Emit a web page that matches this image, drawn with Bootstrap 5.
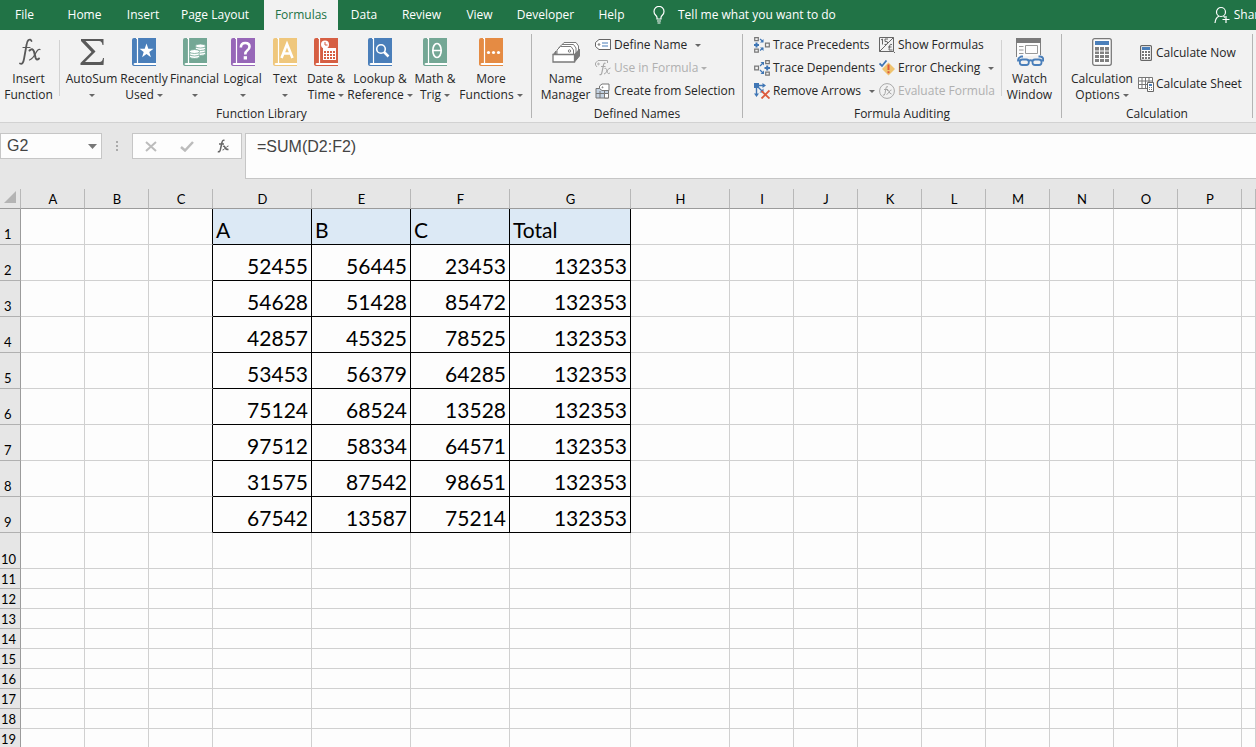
<!DOCTYPE html>
<html lang="en">
<head>
<meta charset="utf-8">
<meta name="viewport" content="width=device-width, initial-scale=1">
<title>Workbook - Formulas</title>
<link href="https://cdn.jsdelivr.net/npm/bootstrap@5.3.0/dist/css/bootstrap.min.css" rel="stylesheet">
<script src="https://cdn.jsdelivr.net/npm/bootstrap@5.3.0/dist/js/bootstrap.bundle.min.js"></script>
<style>
  :root { --xl-green: #217346; --xl-chrome: #e6e6e6; --xl-line: #d0d0d0; }
  body { font-family: "Open Sans", "Noto Sans", sans-serif; font-size: 12px; line-height: 16px; color: #262626; background: #fdfdfd; overflow-x: hidden; }
  button { font: inherit; color: inherit; background: none; border: 0; padding: 0; white-space: nowrap; }
  svg { display: block; flex: none; }
  .tabs-bar { background: var(--xl-green); height: 30px; overflow: hidden; white-space: nowrap; }
  .tabs-bar .nav-link { color: #fff; padding: 7px 0; line-height: 16px; text-align: center; border-radius: 0; }
  .tabs-bar .nav-link.active { background: #f2f2f2; color: var(--xl-green); }
  .tab-list { display: grid; grid-template-columns: 49px 71px 46px 98px 74px 52px 63px 53px 79px 53px; }
  .tell-me { gap: 13px; margin-left: 15px; color: #fff; }
  .share { margin-right: -10px; gap: 4px; color: #fff; }
  .ribbon { background: #f2f2f2; border-bottom: 1px solid #d2d2d2; overflow: hidden; }
  .ribbon-group { flex: none; display: flex; flex-direction: column; position: relative; border-right: 1px solid transparent; }
  .ribbon-group::after { content: ""; position: absolute; right: -1px; top: 4px; bottom: 4px; width: 1px; background: #b4b4b4; }
  .ribbon-group .tools { display: grid; height: 76px; }
  .ribbon-group .caption-text { text-align: center; line-height: 16px; }
  .tools-library { grid-template-columns: 57px 8px 53px 52px 49px 47px 38px 44px 64px 46px 66px 7px; }
  .tools-names { grid-template-columns: 63px 147px; }
  .tools-audit { grid-template-columns: 11px 125px 121px 58px 3px; }
  .tools-calc { grid-template-columns: 76px 114px; }
  .big-tool { display: flex; flex-direction: column; align-items: center; padding-top: 8px; line-height: 16px; }
  .big-tool svg.pic { height: 28px; margin-bottom: 5px; }
  .tool-stack { padding-top: 3px; }
  .small-tool { display: flex; align-items: center; gap: 3px; height: 23px; }
  .small-tool svg.pic { width: 16px; height: 16px; }
  .small-tool:disabled { color: #b0b0b0; }
  .calc-stack { padding-top: 7px; }
  .calc-stack .small-tool { height: 31px; gap: 2px; }
  .thin-rule { width: 1px; height: 56px; margin: 10px auto 0 2px; background: #d2d2d2; }
  .watch { border-left: 1px solid transparent; position: relative; }
  .watch::before { content: ""; position: absolute; left: 0; top: 10px; width: 1px; height: 56px; background: #d2d2d2; }
  .drop::after { content: ""; display: inline-block; border: 3px solid transparent; border-top-color: #666; border-bottom: 0; vertical-align: 2px; margin-left: 3px; }
  .drop-far::after { margin-left: 8px; }
  .drop-only::after { margin-left: 0; }
  .small-tool:disabled .drop::after { border-top-color: #b0b0b0; }
  .formula-bar { background: var(--xl-chrome); padding: 10px 0; font: 16px/18px "Liberation Sans", Arial, sans-serif; color: #444; }
  .grip { margin: 8px 14px 0; }
  .boxed { background: #fdfdfd; border: 1px solid #c6c6c6; height: 26px; }
  .name-box { width: 102px; }
  .name-box input { width: 80px; border: 0; background: none; padding: 0 0 0 6px; color: #444; outline: 0; }
  .bar-tools { width: 110px; justify-content: space-around; }
  .formula-box { height: 46px; border: 1px solid #c6c6c6; border-right: 0; border-radius: 0; resize: none; padding: 4px 11px; margin-left: 3px; background: #fdfdfd; color: #444; outline: 0; overflow: hidden; }
  .grid-wrap { overflow: hidden; }
  .sheet { table-layout: fixed; width: 100%; border-collapse: separate; border-spacing: 0; font-family: Lato, Carlito, Calibri, sans-serif; color: #000; }
  .sheet th, .sheet td { padding: 0; border-right: 1px solid var(--xl-line); border-bottom: 1px solid var(--xl-line); }
  .sheet th { font-weight: 400; font-size: 13px; line-height: 16px; text-align: center; background: var(--xl-chrome); }
  .sheet thead th { height: 20px; border-bottom-color: #9b9b9b; border-right: 1px solid #b8b8b8; vertical-align: bottom; padding: 0 0 1px 1px; }
  .sheet tbody th { height: 20px; border-right-color: #9b9b9b; border-bottom-color: #b0b0b0; vertical-align: bottom; text-align: left; padding: 0 0 1px 1px; }
  .sheet tbody th.one-digit { padding-left: 4px; }
  .sheet tr.tall th { height: 36px; padding-bottom: 2px; }
  .sheet tr.tall th:not(.one-digit) { padding-bottom: 1px; }
  .sheet tr.tall td { font-size: 21px; line-height: 24px; vertical-align: bottom; padding: 0 3px 2px; }
  .sheet td.filled { border-color: #000; text-align: right; }
  .sheet td.edge { border-right-color: #000; }
  .sheet tr td.heading { background: #dce9f5; text-align: left; }
  .w-head { width: 21px; } .w-std { width: 64px; } .w-mid { width: 99px; } .w-wide { width: 121px; }
</style>
</head>
<body>
<svg width="0" height="0" class="position-absolute" aria-hidden="true">
  <symbol id="book" viewBox="0 0 24 28">
    <path d="M2 0H24V25H4V1H5V0Z" fill="currentColor"/><path d="M2 0H4V25Q1 25 0 26V2Q0 0 2 0Z" fill="currentColor"/>
    <path d="M5.500 0V25.500" stroke="#fff" stroke-width="1.200"/><path d="M24 25H3Q1.500 25 1.500 26T3 27H24Z" fill="#fff"/>
    <path d="M0 25V26Q0 28 3 28H24V27H3Q1.500 27 1.500 26T3 25Z" fill="currentColor"/>
  </symbol>
</svg>

<nav class="tabs-bar d-flex align-items-center" aria-label="Ribbon tabs">
  <div class="tab-list nav">
    <a class="nav-link" href="#">File</a><a class="nav-link" href="#">Home</a><a class="nav-link" href="#">Insert</a><a class="nav-link" href="#">Page Layout</a><a class="nav-link active" href="#">Formulas</a><a class="nav-link" href="#">Data</a><a class="nav-link" href="#">Review</a><a class="nav-link" href="#">View</a><a class="nav-link" href="#">Developer</a><a class="nav-link" href="#">Help</a>
  </div>
  <button class="tell-me d-flex align-items-center">
    <svg width="12" height="18" viewBox="0 0 12 18" fill="none" stroke="#fff" stroke-width="1.200"><path d="M4 13V11.500Q4 10.500 2.500 9A5 5 0 1 1 9.500 9Q8 10.500 8 11.500V13ZM4 15H8M4.500 17H7.500"/></svg>
    Tell me what you want to do
  </button>
  <button class="share d-flex align-items-center ms-auto">
    <svg width="16" height="18" viewBox="0 0 16 18" fill="none" stroke="#fff" stroke-width="1.200"><circle cx="7" cy="6" r="4.500"/><path d="M1 17Q1.500 11.500 5 10.200M9.500 10.300L11 11.500M12 10V17M8.500 13.500H15.500"/></svg>
    Share
  </button>
</nav>

<main>
<section class="ribbon d-flex" aria-label="Formulas ribbon">
  <div class="ribbon-group">
    <div class="tools tools-library">
      <button class="big-tool"><svg class="pic" width="24" viewBox="0 0 24 28" fill="none" stroke="#595959" stroke-linecap="round"><path d="M14.500 3Q13.500 .8 11.500 2Q10 3.200 9.500 7L7 21Q6 27 3 25.500" stroke-width="1.800"/><path d="M6 9.500H13" stroke-width="1.200"/><path d="M12.500 12.500Q15.500 9.500 17 13.500L18.500 19.500Q19.500 23 22 20.500" stroke-width="2"/><path d="M23 11.500Q21 10.500 18.500 15.500T12.500 22" stroke-width="1.200"/></svg>Insert<br>Function</button>
      <div class="thin-rule"></div>
      <button class="big-tool"><svg class="pic" width="24" viewBox="0 0 24 28"><path d="M1 1H23.500V7H22.500Q22 3 19 3H5.500L15.500 13.500L5 24H19.500Q22.500 24 23 20H24L23.500 27H.5V25L11.500 14L1 3Z" fill="#595959"/></svg>AutoSum<span class="drop drop-only"></span></button>
      <button class="big-tool"><svg class="pic" width="24" viewBox="0 0 24 28" color="#4a7fba"><use href="#book"/><path d="M14.500 5.500L16.300 10.800H21.500L17.300 14L18.900 19.300L14.500 16L10.100 19.300L11.700 14L7.500 10.800H12.700Z" fill="#fff"/></svg>Recently<br><span class="drop">Used</span></button>
      <button class="big-tool"><svg class="pic" width="24" viewBox="0 0 24 28" color="#74a795"><use href="#book"/><g fill="#fff" stroke="#74a795" stroke-width=".8"><ellipse cx="17.500" cy="15.500" rx="5" ry="2"/><ellipse cx="17.500" cy="13" rx="5" ry="2"/><ellipse cx="17.500" cy="10.500" rx="5" ry="2"/><ellipse cx="17.500" cy="8" rx="5" ry="2"/><ellipse cx="11.500" cy="18.500" rx="5" ry="2"/><ellipse cx="11.500" cy="16" rx="5" ry="2"/><ellipse cx="11.500" cy="13.500" rx="5" ry="2"/></g></svg>Financial<span class="drop drop-only"></span></button>
      <button class="big-tool"><svg class="pic" width="24" viewBox="0 0 24 28" color="#9767b8"><use href="#book"/><path d="M9.800 9.500Q10 5 14.300 5Q18.500 5 18.500 8.800Q18.500 11 16.200 12.500Q14.300 13.800 14.300 16.500" fill="none" stroke="#fff" stroke-width="2.600"/><rect x="12.700" y="18.200" width="3.300" height="3.300" fill="#fff"/></svg>Logical<span class="drop drop-only"></span></button>
      <button class="big-tool"><svg class="pic" width="24" viewBox="0 0 24 28" color="#efc77c"><use href="#book"/><path d="M8.500 20L14 6L19.500 20M10.500 15.500H17.500" fill="none" stroke="#fff" stroke-width="2.600"/></svg>Text<span class="drop drop-only"></span></button>
      <button class="big-tool"><svg class="pic" width="24" viewBox="0 0 24 28" color="#d65f43"><use href="#book"/><circle cx="11" cy="6.500" r="4" fill="#fff"/><path d="M11 4V7H13.500" fill="none" stroke="#d65f43"/><rect x="9" y="10" width="13" height="12" fill="#fff"/><g fill="#d65f43"><path d="M10 13h2v2h-2zm3 0h2v2h-2zm3 0h2v2h-2zm3 0h2v2h-2zM10 16h2v2h-2zm3 0h2v2h-2zm3 0h2v2h-2zm3 0h2v2h-2zM10 19h2v2h-2zm3 0h2v2h-2zm3 0h2v2h-2zm3 0h2v2h-2z"/></g></svg>Date &amp;<br><span class="drop">Time</span></button>
      <button class="big-tool"><svg class="pic" width="24" viewBox="0 0 24 28" color="#4a7fba"><use href="#book"/><circle cx="13" cy="11" r="4.300" fill="none" stroke="#fff" stroke-width="1.600"/><path d="M16 14L20.500 18.500" stroke="#fff" stroke-width="2.500"/></svg>Lookup &amp;<br><span class="drop">Reference</span></button>
      <button class="big-tool"><svg class="pic" width="24" viewBox="0 0 24 28" color="#74a795"><use href="#book"/><ellipse cx="14" cy="12.500" rx="4.200" ry="7" fill="none" stroke="#fff" stroke-width="1.700"/><path d="M10 12.500H18" stroke="#fff" stroke-width="1.500"/></svg>Math &amp;<br><span class="drop">Trig</span></button>
      <button class="big-tool"><svg class="pic" width="24" viewBox="0 0 24 28" color="#e58b43"><use href="#book"/><g fill="#fff"><circle cx="9.500" cy="14.500" r="1.600"/><circle cx="14.500" cy="14.500" r="1.600"/><circle cx="19.500" cy="14.500" r="1.600"/></g></svg>More<br><span class="drop">Functions</span></button>
    </div>
    <div class="caption-text pe-2">Function Library</div>
  </div>

  <div class="ribbon-group">
    <div class="tools tools-names">
      <button class="big-tool ps-1"><svg class="pic" width="28" viewBox="0 0 28 28" fill="#fff" stroke="#7a7a7a"><path d="M9 15V8L12 4.500H24L26.500 8V15Z"/><path d="M7 17V9.500L10 6.500H21.500L24 10V17Z"/><path d="M5 18V12L8.500 8.500H19L21.500 12V18Z"/><circle cx="17.500" cy="13" r="1.200"/><path d="M1 17L4 13V17M22.500 16.500L27.500 11V18L22.500 24Z" fill="#7a7a7a"/><path d="M1 16.500H22.500V24H1Z" stroke-width="1.300"/></svg>Name<br>Manager</button>
      <div class="tool-stack">
        <button class="small-tool"><svg class="pic" viewBox="0 0 16 16" fill="#fff" stroke="#666"><path d="M4 2.500H15.500V12.500H4L.5 9.500V5.500Z"/><circle cx="4" cy="7.500" r=".8"/><path d="M7 6H13M7 9H13" stroke="#4a7fba" stroke-width="1.200"/></svg><span class="drop drop-far">Define Name</span></button>
        <button class="small-tool" disabled><svg class="pic" viewBox="0 0 16 16" fill="none" stroke="#a8a8a8"><path d="M2 7L.5 5V3L3 .5H12.500V3"/><circle cx="3.500" cy="4" r=".8"/><path d="M10.500 3.500Q9 2.500 8.500 5L7 12Q6.500 15.500 4.500 14.500M6 6.500H10.500" stroke-width="1.200"/><path d="M9.500 8.500Q11 7.500 11.500 9.500L12.500 12.500Q13 14.500 15 13M15.500 8Q13.500 8 12 11T9 14"/></svg><span class="drop">Use in Formula</span></button>
        <button class="small-tool"><svg class="pic" viewBox="0 0 16 16" fill="#fff" stroke="#777"><path d="M1 5.500H13.500V15H1Z" fill="#c3d2e2"/><path d="M5 8V15M9.500 8V15M1 10.500H13.500" fill="none"/><path d="M9.500 10.500H13.500V15H9.500Z"/><path d="M7 1H14V7.500H7L4.500 5.500V3Z"/><circle cx="7.500" cy="4.300" r=".5"/></svg>Create from Selection</button>
      </div>
    </div>
    <div class="caption-text">Defined Names</div>
  </div>

  <div class="ribbon-group">
    <div class="tools tools-audit">
      <span></span>
      <div class="tool-stack">
        <button class="small-tool"><svg class="pic" viewBox="0 0 16 16" fill="none" stroke="#777" stroke-width="1.200"><path d="M.7.700H4.300V3.600H.7ZM.7 12.200H4.300V15.200H.7ZM11.500 6.200H15.300V9.800H11.500Z"/><path d="M0 8H5M2.500 5.500V10.500" stroke="#3f76b5" stroke-width="2"/><path d="M6 2L9 4.500M6 13.500L9 11" stroke="#3f76b5"/><path d="M9.500 2V5.500H6ZM9.500 14V10.500H6Z" fill="#3f76b5" stroke="none"/></svg>Trace Precedents</button>
        <button class="small-tool"><svg class="pic" viewBox="0 0 16 16" fill="none" stroke="#777" stroke-width="1.200"><path d="M11.700.700H15.300V3.600H11.700ZM11.700 12.200H15.300V15.200H11.700ZM.7 6.200H4.500V9.800H.7Z"/><path d="M10.500 8H16M13.200 5.500V10.500" stroke="#3f76b5" stroke-width="2"/><path d="M6 6L9 3M6 10L9 13" stroke="#3f76b5"/><path d="M6.500 2H10V5.500ZM6.500 14H10V10.500Z" fill="#3f76b5" stroke="none"/></svg>Trace Dependents</button>
        <button class="small-tool"><svg class="pic" viewBox="0 0 16 16" fill="none" stroke="#3f76b5" stroke-width="1.400"><path d="M2.500 2.500H9M2.500 2.500V11M2.500 2.500L8.500 8.500"/><path d="M8.500 0L12 2.500L8.500 5ZM0 10.500L2.500 14L5 10.500ZM9.500 5.500V9.500H5.500ZM0 0H5V5H0Z" fill="#3f76b5" stroke="none"/><path d="M7.500 8L15.500 15.500M15.500 7.500L7.500 15.500" stroke="#dd5a3c" stroke-width="1.800"/></svg><span class="drop drop-far">Remove Arrows</span></button>
      </div>
      <div class="tool-stack">
        <button class="small-tool"><svg class="pic" viewBox="0 0 16 16" fill="none" stroke="#666"><path d="M.5.500H14.500V14.500H.5ZM14.500 .5L.5 14.500M14.500 14.500L16 16"/><path d="M2 3L3.500 2V7.500M9 2H6V4.500Q9 4 8.700 6T5.500 7.500M13 7.500Q11 6.500 10.500 9L10 13H13.500M9 10H12.500"/></svg>Show Formulas</button>
        <button class="small-tool"><svg class="pic" viewBox="0 0 16 16" fill="none"><path d="M9.500 2.500L16 9L9.500 15.500L3 9Z" fill="#efc36f"/><path d="M9.500 4.500V10M9.500 11.300V13.300" stroke="#dd5a3c" stroke-width="2"/><path d="M.5 3.500L3 6L7.500 .5" stroke="#3f76b5" stroke-width="1.800"/></svg><span class="drop drop-far">Error Checking</span></button>
        <button class="small-tool" disabled><svg class="pic" viewBox="0 0 16 16" fill="none" stroke="#a8a8a8"><circle cx="8" cy="8" r="7.400"/><path d="M9 4Q7.500 2.500 7 5L6 10.500Q5.500 13 3.800 12M5 6.500H9"/><path d="M8 7.500Q9.500 6.500 10 8.500T12.500 11M12.500 7Q11 7 10 9T7.500 11.500"/></svg>Evaluate Formula</button>
      </div>
      <button class="big-tool watch"><svg class="pic" width="28" viewBox="0 0 28 28" fill="none" stroke="#808080"><path d="M.5 19V.5H24.500V17" fill="#fdfdfd"/><path d="M0 0H25V5H0Z" fill="#7a7a7a" stroke="none"/><path d="M3 8.500H7.500M3 12H7.500M3 15.500H7.500M9.500 7.500H21.500V15.500H9.500Z" stroke="#999"/><path d="M2 19H28V28H2Z" fill="#f2f2f2" stroke="none"/><g stroke="#4a7fba" stroke-width="1.800"><path d="M5 18.500Q2 20 2 22.500H4M25.500 22.500H27.500Q27.500 19 24.500 18.500M4.500 18.500H7M22.500 18.500H25M12.500 23Q14.500 21.500 16.500 23"/><rect x="3.800" y="21.500" width="9" height="5.500" rx="2.500"/><rect x="16.500" y="21.500" width="9" height="5.500" rx="2.500"/></g></svg>Watch<br>Window</button>
      <span></span>
    </div>
    <div class="caption-text">Formula Auditing</div>
  </div>

  <div class="ribbon-group">
    <div class="tools tools-calc">
      <button class="big-tool ps-1"><svg class="pic" width="20" viewBox="0 0 20 28"><rect x=".7" y=".7" width="18.600" height="26.600" rx="2" fill="#fdfdfd" stroke="#7a7a7a" stroke-width="1.300"/><path d="M3 3H17V7H3Z" fill="#4a7fba"/><path d="M3 9h4v3.500H3zm5 0h4v3.500H8zm5 0h4v3.500h-4zM3 13.500h4V16H3zm5 0h4V16H8zm5 0h4V16h-4zM3 17h4v3H3zm5 0h4v3H8zm5 0h4v3h-4zM3 21h4v3H3zm5 0h4v3H8zm5 0h4v3h-4z" fill="#808080"/></svg>Calculation<br><span class="drop">Options</span></button>
      <div class="calc-stack">
        <button class="small-tool"><svg class="pic" viewBox="0 0 16 16"><rect x="2.600" y=".6" width="10.800" height="14.800" rx="1" fill="#fff" stroke="#666" stroke-width="1.200"/><path d="M4 2H12V5H4Z" fill="#4a7fba"/><path d="M4 6h2v2H4zm3 0h2v2H7zm3 0h2v2h-2zM4 9h2v2H4zm3 0h2v2H7zm3 0h2v2h-2zM4 12h2v2H4zm3 0h2v2H7zm3 0h2v2h-2z" fill="#777"/></svg>Calculate Now</button>
        <button class="small-tool"><svg class="pic" viewBox="0 0 16 16" fill="#fff" stroke="#777"><path d="M.5 1.500H14.500V12.500H.5ZM4 1.500V12.500M7.500 1.500V12.500M11 1.500V12.500M.5 5H14.500M.5 8.500H14.500"/><path d="M9.500 6.500H15.500V15.500H9.500Z" stroke="#666"/><path d="M11 8H14V10H11Z" fill="#4a7fba" stroke="none"/><path d="M11 11h1v1h-1zm2 0h1v1h-1zm-2 2h1v1h-1zm2 0h1v1h-1z" fill="#777" stroke="none"/></svg>Calculate Sheet</button>
      </div>
    </div>
    <div class="caption-text">Calculation</div>
  </div>
</section>

<section class="formula-bar d-flex align-items-start" aria-label="Formula bar">
  <div class="boxed name-box d-flex align-items-center">
    <input type="text" value="G2" aria-label="Name box"><button aria-label="Choose name" class="ms-auto me-1"><svg width="9" height="5" viewBox="0 0 9 5"><path d="M0 0H9L4.500 5Z" fill="#777"/></svg></button>
  </div>
  <svg class="grip" width="2" height="11" viewBox="0 0 2 11" fill="#aaa"><path d="M0 0h2v2H0zM0 4h2v2H0zM0 8h2v2H0z"/></svg>
  <div class="boxed bar-tools d-flex align-items-center">
    <button aria-label="Cancel"><svg width="12" height="11" viewBox="0 0 12 11" fill="none" stroke="#bcbcbc" stroke-width="2"><path d="M1 1L11 10M11 1L1 10"/></svg></button>
    <button aria-label="Enter"><svg width="14" height="11" viewBox="0 0 14 11" fill="none" stroke="#bcbcbc" stroke-width="2.500"><path d="M1 6L5 9.500L13 1"/></svg></button>
    <button aria-label="Insert function"><svg width="13" height="14" viewBox="0 0 13 14" fill="none" stroke="#666"><path d="M7.500 1.500Q5.500 .5 5 3.500L3.500 10Q3 13.500 .8 12.500M2 5H7" stroke-width="1.500"/><path d="M6 7.500Q7.500 6.500 8 8.500T11.500 10.500" stroke-width="1.500"/><path d="M11.500 7Q10 7 8.500 9T5.500 11"/></svg></button>
  </div>
  <textarea class="formula-box flex-grow-1" rows="2" aria-label="Formula">=SUM(D2:F2)</textarea>
</section>

<div class="grid-wrap">
  <table class="sheet" id="sheet">
    <colgroup><col class="w-head"><col class="w-std" span="3"><col class="w-mid" span="3"><col class="w-wide"><col class="w-mid"><col class="w-std" span="8"><col></colgroup>
    <thead><tr><th><svg width="12" height="12" viewBox="0 0 12 12" class="ms-auto me-1 mb-1" aria-label="Select all"><path d="M12 0V12H0Z" fill="#b4b4b4"/></svg></th></tr></thead>
    <tbody></tbody>
  </table>
</div>
</main>
<script>
  const columns = [..."ABCDEFGHIJKLMNOP", ""];
  const data = [
    ["A", "B", "C", "Total"],
    [52455, 56445, 23453, 132353], [54628, 51428, 85472, 132353],
    [42857, 45325, 78525, 132353], [53453, 56379, 64285, 132353],
    [75124, 68524, 13528, 132353], [97512, 58334, 64571, 132353],
    [31575, 87542, 98651, 132353], [67542, 13587, 75214, 132353]
  ];
  const sheet = document.getElementById("sheet");
  columns.forEach(name => {
    const th = document.createElement("th");
    th.scope = "col";
    th.textContent = name;
    sheet.tHead.rows[0].append(th);
  });
  for (let r = 1; r <= 19; r++) {
    const row = sheet.tBodies[0].insertRow();
    if (r <= 10) row.className = "tall";
    const th = document.createElement("th");
    th.scope = "row";
    th.textContent = r;
    if (r < 10) th.className = "one-digit";
    row.append(th);
    columns.forEach((_, c) => {
      const cell = row.insertCell();
      if (r > data.length) return;
      if (c === 2) cell.className = "edge";
      if (c >= 3 && c <= 6) {
        cell.className = r === 1 ? "filled heading" : "filled";
        cell.textContent = data[r - 1][c - 3];
      }
    });
  }
</script>
</body>
</html>
